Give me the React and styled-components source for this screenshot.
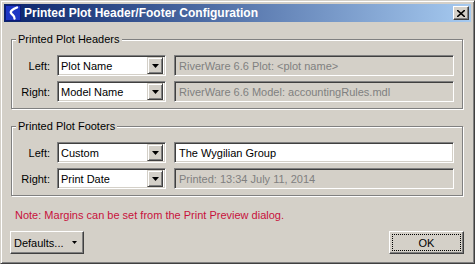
import styled, { createGlobalStyle } from 'styled-components';

const Global = createGlobalStyle`
    html, body {
        margin: 0;
        padding: 0;
        background: #d4d0c8;
    }
    * {
        box-sizing: border-box;
    }
`;

const face = '#d4d0c8';

const Window = styled.div`
    width: 475px;
    height: 264px;
    display: flex;
    flex-direction: column;
    padding: 3px;
    background: ${face};
    border: 1px solid;
    border-color: ${face} #404040 #404040 ${face};
    box-shadow: inset 1px 1px 0 #fff, inset -1px -1px 0 #808080;
    font-family: "Liberation Sans", Arial, sans-serif;
    font-size: 11px;
    color: #000;
`;

const TitleBar = styled.div`
    height: 18px;
    display: flex;
    align-items: center;
    padding: 0 2px 0 1px;
    background: linear-gradient(to right, #0a246a, #a6caf0);
`;

const TitleText = styled.span`
    flex: 1;
    margin-left: 3px;
    color: #fff;
    font-weight: bold;
    font-size: 12px;
    white-space: nowrap;
`;

const CloseButton = styled.div`
    width: 16px;
    height: 14px;
    display: flex;
    align-items: center;
    justify-content: center;
    background: ${face};
    border: 1px solid;
    border-color: #fff #404040 #404040 #fff;
    box-shadow: inset -1px -1px 0 #808080;
`;

const Body = styled.div`
    flex: 1;
    display: flex;
    flex-direction: column;
    padding: 17px 8px 0 7px;
`;

const GroupBox = styled.div`
    border: 1px solid #808080;
    box-shadow: 1px 1px 0 #fff, inset 1px 1px 0 #fff;
    padding: 9px 0 6px 0;
    margin-top: ${p => p.$gap}px;
`;

const Caption = styled.div`
    display: table;
    margin: -16px 0 0 4px;
    padding: 0 2px;
    height: 13px;
    line-height: 13px;
    background: ${face};
`;

const Rows = styled.div`
    display: flex;
    flex-direction: column;
    gap: 5px;
    margin-top: 9px;
`;

const Row = styled.div`
    display: flex;
    align-items: center;
    height: 21px;
`;

const Label = styled.span`
    width: 38px;
    margin-right: 7px;
    text-align: right;
`;

const sunken = `
    border: 1px solid;
    border-color: #808080 #fff #fff #808080;
    box-shadow: inset 1px 1px 0 #404040, inset -1px -1px 0 ${face};
`;

const Combo = styled.div`
    ${sunken}
    width: 109px;
    height: 21px;
    display: flex;
    align-items: center;
    padding: 2px;
    background: #fff;
`;

const ComboText = styled.span`
    flex: 1;
    padding-left: 1px;
    white-space: nowrap;
`;

const ArrowButton = styled.div`
    width: 16px;
    height: 17px;
    display: flex;
    align-items: center;
    justify-content: center;
    background: ${face};
    border: 1px solid;
    border-color: ${face} #404040 #404040 ${face};
    box-shadow: inset 1px 1px 0 #fff, inset -1px -1px 0 #808080;
`;

const Field = styled.div`
    ${sunken}
    width: 280px;
    height: 21px;
    margin-left: 8px;
    padding: 0 4px;
    display: flex;
    align-items: center;
    white-space: nowrap;
    background: ${p => (p.$disabled ? face : '#fff')};
    color: ${p => (p.$disabled ? '#808080' : '#000')};
`;

const Note = styled.div`
    margin: 13px 0 0 4px;
    color: #c8103c;
    line-height: 13px;
`;

const Footer = styled.div`
    display: flex;
    justify-content: space-between;
    margin: 9px -1px 0 -1px;
`;

const Button = styled.div`
    width: ${p => p.$w}px;
    height: 23px;
    display: flex;
    align-items: center;
    justify-content: ${p => (p.$menu ? 'space-between' : 'center')};
    padding: ${p => (p.$menu ? '0 6px 0 3px' : '2px')};
    background: ${face};
    border: 1px solid;
    border-color: #fff #404040 #404040 #fff;
    box-shadow: inset -1px -1px 0 #808080;
`;

const Focus = styled.div`
    width: 100%;
    height: 100%;
    display: flex;
    align-items: center;
    justify-content: center;
    border: 1px dotted #000;
`;

const Triangle = ({ w = 7 }) => (
    <svg width={w} height={Math.ceil(w / 2)} viewBox={`0 0 ${w} ${Math.ceil(w / 2)}`}>
        <polygon points={`0,0 ${w},0 ${w / 2},${Math.ceil(w / 2)}`} fill="#000" />
    </svg>
);

const Logo = () => (
    <svg width="16" height="16" viewBox="0 0 16 16">
        <rect x="0" y="0" width="16" height="16" fill="#1d36c4" />
        <rect x="0.5" y="0.5" width="15" height="15" fill="none" stroke="#0c1a7a" />
        <path d="M12 2.5 C8 4 5 6 6 8 C7 10 10 11 9.5 13.5" fill="none" stroke="#fff" strokeWidth="2.4" strokeLinecap="round" />
    </svg>
);

const CloseGlyph = () => (
    <svg width="8" height="7" viewBox="0 0 8 7">
        <path d="M0 0 L8 7 M8 0 L0 7" stroke="#000" strokeWidth="1.6" />
    </svg>
);

const headers = [
    { side: 'Left:', choice: 'Plot Name', text: 'RiverWare 6.6 Plot: <plot name>', disabled: true },
    { side: 'Right:', choice: 'Model Name', text: 'RiverWare 6.6 Model: accountingRules.mdl', disabled: true },
];

const footers = [
    { side: 'Left:', choice: 'Custom', text: 'The Wygilian Group', disabled: false },
    { side: 'Right:', choice: 'Print Date', text: 'Printed: 13:34 July 11, 2014', disabled: true },
];

const Group = ({ title, rows, gap }) => (
    <GroupBox $gap={gap}>
        <Caption>{title}</Caption>
        <Rows>
            {rows.map(r => (
                <Row key={r.side}>
                    <Label>{r.side}</Label>
                    <Combo>
                        <ComboText>{r.choice}</ComboText>
                        <ArrowButton><Triangle /></ArrowButton>
                    </Combo>
                    <Field $disabled={r.disabled}>{r.text}</Field>
                </Row>
            ))}
        </Rows>
    </GroupBox>
);

export default function App() {
    return (
        <>
            <Global />
            <Window>
                <TitleBar>
                    <Logo />
                    <TitleText>Printed Plot Header/Footer Configuration</TitleText>
                    <CloseButton><CloseGlyph /></CloseButton>
                </TitleBar>
                <Body>
                    <Group title="Printed Plot Headers" rows={headers} gap={0} />
                    <Group title="Printed Plot Footers" rows={footers} gap={17} />
                    <Note>Note: Margins can be set from the Print Preview dialog.</Note>
                    <Footer>
                        <Button $w={74} $menu>
                            <span>Defaults...</span>
                            <Triangle w={5} />
                        </Button>
                        <Button $w={75}>
                            <Focus>OK</Focus>
                        </Button>
                    </Footer>
                </Body>
            </Window>
        </>
    );
}
